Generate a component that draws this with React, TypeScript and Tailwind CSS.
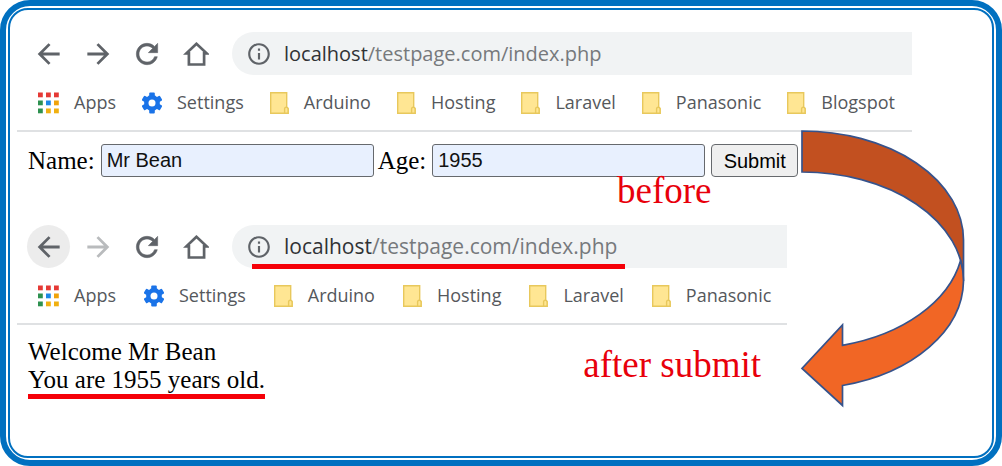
import type { ReactNode } from "react"
import clsx from "clsx"
import { MdInfoOutline } from "react-icons/md"

const appDots = [
  "#e53935", "#e53935", "#e53935",
  "#2e9150", "#1e88e5", "#f0a30a",
  "#2e9150", "#f0b010", "#f0b010",
]

const folders = ["Arduino", "Hosting", "Laravel", "Panasonic", "Blogspot"]

function BackIcon() {
  return (
    <svg width="32" height="32" viewBox="0 0 24 24" fill="none" stroke="currentColor" strokeWidth="2.1">
      <path d="M20 12H5.4M12.4 4.6 5 12l7.4 7.4" />
    </svg>
  )
}

function ForwardIcon() {
  return (
    <svg width="32" height="32" viewBox="0 0 24 24" fill="none" stroke="currentColor" strokeWidth="2.1">
      <path d="M4 12h14.6M11.6 4.6 19 12l-7.4 7.4" />
    </svg>
  )
}

function ReloadIcon() {
  return (
    <svg width="32" height="32" viewBox="0 0 24 24" fill="currentColor" stroke="currentColor" strokeWidth="0.4">
      <path d="M17.65 6.35C16.2 4.9 14.21 4 12 4c-4.42 0-7.99 3.58-7.99 8s3.57 8 7.99 8c3.73 0 6.84-2.55 7.73-6h-2.08c-.82 2.33-3.04 4-5.65 4-3.31 0-6-2.69-6-6s2.69-6 6-6c1.66 0 3.14.69 4.22 1.78L13 11h7V4z" />
    </svg>
  )
}

function HomeIcon() {
  return (
    <svg width="26" height="26" viewBox="0 0 26 26" fill="none" stroke="currentColor" strokeWidth="2.7">
      <path d="M13.5 2.8 3.4 12.3h2.5v11.2h15.2V12.3h2.5z" />
    </svg>
  )
}

function AppsIcon() {
  return (
    <svg width="22" height="22" viewBox="0 0 22 22">
      {appDots.map((color, i) => (
        <rect key={i} x={(i % 3) * 8 + 1} y={Math.floor(i / 3) * 8 + 0.5} width="4.8" height="4.8" fill={color} />
      ))}
    </svg>
  )
}

function GearIcon() {
  return (
    <svg width="20" height="22" viewBox="0 0 20 22" fill="#1a73e8">
      <circle cx="10" cy="11" r="7.9" />
      <rect x="7.2" y=".6" width="5.6" height="20.8" rx="1" />
      <rect x="7.2" y=".6" width="5.6" height="20.8" rx="1" transform="rotate(60 10 11)" />
      <rect x="7.2" y=".6" width="5.6" height="20.8" rx="1" transform="rotate(120 10 11)" />
      <circle cx="10" cy="11" r="3.5" fill="#fff" />
    </svg>
  )
}

function FolderIcon() {
  return (
    <svg width="19" height="22" viewBox="0 0 19 22" fill="#ffe693" stroke="#e8c85c" strokeWidth="1.4">
      <path d="M.7.7h16v14.6l1.4 1.4v4.6H.7z" />
      <path d="M14.6 21.3v-4.2c0-1.4.6-1.8 1.6-1.8s1.9.6 1.9 1.8v4.2z" />
    </svg>
  )
}

function NavButton({ label, active, disabled, children }: {
  label: string
  active?: boolean
  disabled?: boolean
  children: ReactNode
}) {
  return (
    <button
      type="button"
      aria-label={label}
      disabled={disabled}
      className={clsx(
        "flex size-[43px] shrink-0 items-center justify-center rounded-full",
        active && "bg-[#ececec]",
        disabled ? "text-[#b9bbbd]" : "text-[#5f6368]",
      )}
    >
      {children}
    </button>
  )
}

function Bookmark({ label, icon }: { label: string; icon: ReactNode }) {
  return (
    <a href="#" className="flex shrink-0 items-center gap-[15px]">
      {icon}
      {label}
    </a>
  )
}

function Browser({ items, submitted }: { items: string[]; submitted?: boolean }) {
  return (
    <div className="border-b-2 border-[#dfe1e3] font-['Open_Sans',sans-serif]">
      <div className="flex items-center gap-1.5 pl-[10px]">
        <NavButton label="Back" active={submitted}>
          <BackIcon />
        </NavButton>
        <NavButton label="Forward" disabled={submitted}>
          <ForwardIcon />
        </NavButton>
        <NavButton label="Reload">
          <ReloadIcon />
        </NavButton>
        <NavButton label="Home">
          <HomeIcon />
        </NavButton>
        <div className="relative ml-[9px] flex h-[43px] grow items-center gap-3 rounded-l-full bg-[#f1f3f4] pl-[14px] text-[#76797c]">
          <MdInfoOutline size={26} className="text-[#5f6368]" />
          <span className={submitted ? "text-[21px]" : "text-[20px]"}>
            <span className="text-[#303235]">localhost</span>/testpage.com/index.php
          </span>
          {submitted && <span className="absolute -bottom-px left-5 h-[5px] w-[373px] bg-[#f50008]" />}
        </div>
      </div>
      <nav
        className={clsx(
          "flex h-[55px] items-center pl-5 text-[18px] text-[#55585c]",
          submitted ? "gap-7" : "gap-[26px]",
        )}
      >
        <Bookmark label="Apps" icon={<AppsIcon />} />
        <Bookmark label="Settings" icon={<GearIcon />} />
        {items.map((name) => (
          <Bookmark key={name} label={name} icon={<FolderIcon />} />
        ))}
      </nav>
    </div>
  )
}

function CurvedArrow() {
  return (
    <svg
      width="166"
      height="280"
      viewBox="800 129 166 280"
      stroke="#36538c"
      strokeWidth="1.7"
      strokeLinejoin="miter"
      className="absolute top-[119px] right-[26px]"
    >
      <path d="M802 131A161.5 109 0 0 1 963.5 240V281A161.5 109 0 0 0 802 172Z" fill="#c25020" />
      <path
        d="M842.5 345.3A161.5 109 0 0 0 960.6 260.5A161.5 109 0 0 1 963.5 281A161.5 109 0 0 1 842.5 385.5V405.5L802 368.5L842.5 325Z"
        fill="#f16625"
      />
    </svg>
  )
}

const fieldClass =
  "h-[33px] w-[273px] rounded-[3px] border border-[#66696d] bg-[#e8f0fe] px-[5px] font-['Liberation_Sans',sans-serif] text-[20px] text-[#111]"

export default function App() {
  return (
    <div className="flex min-h-screen flex-col rounded-[30px] border-[6px] border-[#0070c0] bg-white p-0.5">
      <main className="relative grow rounded-[20px] border-2 border-[#0070c0] pt-[22px] pl-[7px] font-['Liberation_Serif',serif] text-black">
        <section className="mr-20">
          <Browser items={folders} />
          <form className="flex items-center pt-3 pl-[11px] text-[25px] leading-[33px]">
            <label htmlFor="name" className="mr-1.5">Name:</label>
            <input id="name" type="text" defaultValue="Mr Bean" className={fieldClass} />
            <label htmlFor="age" className="mr-1.5 ml-1">Age:</label>
            <input id="age" type="text" defaultValue="1955" className={fieldClass} />
            <button
              type="button"
              className="ml-1.5 h-[33px] w-[87px] rounded-[4px] border border-[#66696d] bg-[#efefef] font-['Liberation_Sans',sans-serif] text-[20px] leading-7"
            >
              Submit
            </button>
          </form>
          <p className="pl-[600px] text-[37px] leading-7 text-[#e8000b]">before</p>
        </section>

        <section className="mt-5 mr-[205px]">
          <Browser items={folders.slice(0, 4)} submitted />
          <div className="flex items-start justify-between pt-[13px] pr-[26px] pl-[11px]">
            <p className="border-b-[5px] border-[#f50008] text-[25px] leading-7">
              Welcome Mr Bean
              <br />
              You are 1955 years old.
            </p>
            <p className="pt-[13px] text-[37px] leading-7 text-[#e8000b]">after submit</p>
          </div>
        </section>

        <CurvedArrow />
      </main>
    </div>
  )
}
